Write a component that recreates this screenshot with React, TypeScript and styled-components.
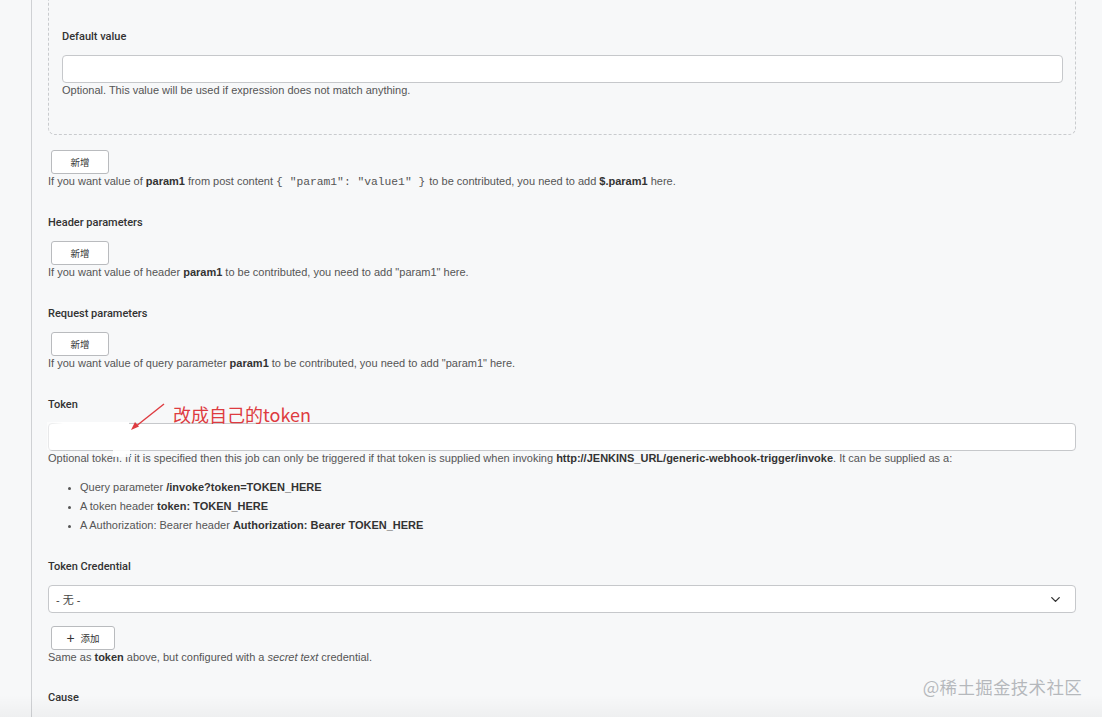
import React from "react";
import styled, { createGlobalStyle } from "styled-components";
import { ChevronDown } from "lucide-react";

const Global = createGlobalStyle`
  html, body { margin: 0; padding: 0; background: #f7f8f9; overflow: hidden; }
  body { font-family: "Liberation Sans", Arial, "Noto Sans CJK SC", sans-serif; }
`;

const Page = styled.div`
  position: relative;
  width: 1102px;
  height: 717px;
  overflow: hidden;
  background: #f7f8f9;
`;

const Rail = styled.div`
  margin-left: 31px;
  height: 100%;
  border-left: 1px solid #cfd1d4;
  padding-left: 16px;
`;

const Content = styled.div`
  width: 1028px;
  display: flex;
  flex-direction: column;
`;

const DashedBox = styled.div`
  margin-top: -20px;
  border: 1px dashed #c9cbce;
  border-radius: 0 0 7px 7px;
  padding: 49px 12px 37px 13px;
  display: flex;
  flex-direction: column;
`;

const Label = styled.div<{ $top?: number }>`
  font-family: Roboto, "Liberation Sans", sans-serif;
  font-weight: 500;
  font-size: 11px;
  line-height: 14px;
  color: #333;
  margin-top: ${(p) => (p.$top ?? 27)}px;
  margin-bottom: 11px;
`;

const TextInput = styled.div`
  height: 26px;
  background: #fff;
  border: 1px solid #c6c8cb;
  border-radius: 4px;
`;

const Help = styled.div`
  font-size: 11px;
  line-height: 14px;
  color: #555;
  b { color: #333; font-weight: 700; }
  i { font-style: italic; }
`;

const Code = styled.code`
  font-family: "Liberation Mono", "Courier New", monospace;
  font-size: 11.3px;
  color: #555;
  margin: 0 1px 0 0;
`;

const AddButton = styled.button<{ $w?: number }>`
  margin-left: 3px;
  width: ${(p) => p.$w ?? 58}px;
  height: 24px;
  box-sizing: border-box;
  background: #fff;
  border: 1px solid #b9bbbe;
  border-radius: 3px;
  font-family: "Noto Sans CJK SC", sans-serif;
  font-size: 9.5px;
  color: #333;
  padding: 0;
  display: flex;
  align-items: center;
  justify-content: center;
  gap: 6px;
  align-self: flex-start;
`;

const Plus = styled.span`
  font-family: "Liberation Sans", sans-serif;
  font-size: 14px;
  font-weight: 300;
  line-height: 1;
  margin-top: -1px;
`;

const BulletList = styled.ul`
  margin: 13px 0 0;
  padding-left: 32px;
  font-size: 11px;
  line-height: 19px;
  color: #555;
  li::marker { font-size: 9px; color: #555; }
  b { color: #333; font-weight: 700; }
`;

const Section = styled.div`
  position: relative;
  display: flex;
  flex-direction: column;
`;

const InputWrap = styled.div`
  position: relative;
`;

const Redaction = styled.div`
  position: absolute;
  left: -1px;
  top: -1px;
  width: 82px;
  height: 28px;
  background: linear-gradient(90deg, rgba(255,255,255,0.55), #fff 20%);
`;

const RedactionTail = styled.div`
  position: absolute;
  left: 65px;
  top: 27px;
  width: 17px;
  height: 7px;
  background: rgba(255, 255, 255, 0.9);
`;

const Annotation = styled.div`
  position: absolute;
  z-index: 2;
  left: 81px;
  top: 33px;
  display: flex;
  align-items: flex-start;
  gap: 6px;
  pointer-events: none;
`;

const AnnotationText = styled.span`
  font-family: "Noto Sans CJK SC", "Liberation Sans", sans-serif;
  font-size: 18px;
  line-height: 22px;
  color: #de3b40;
`;

const SelectBox = styled.div`
  height: 26px;
  background: #fff;
  border: 1px solid #c6c8cb;
  border-radius: 4px;
  display: flex;
  align-items: center;
  justify-content: space-between;
  padding: 0 12px 0 7px;
  font-family: "Liberation Sans", "Noto Sans CJK SC", sans-serif;
  font-size: 11px;
  color: #444;
`;

const ButtonRow = styled.div<{ $top?: number }>`
  margin-top: ${(p) => p.$top ?? 13}px;
  display: flex;
`;

const Watermark = styled.div`
  position: absolute;
  right: 20px;
  bottom: 19px;
  font-family: "Noto Sans CJK SC", sans-serif;
  font-size: 17.5px;
  line-height: 22px;
  color: rgba(160, 163, 168, 0.75);
  letter-spacing: 0.3px;
`;

const BottomShade = styled.div`
  position: absolute;
  left: 0;
  right: 0;
  bottom: 0;
  height: 22px;
  background: linear-gradient(180deg, rgba(0,0,0,0), rgba(0,0,0,0.035));
  pointer-events: none;
`;

export default function App() {
  return (
    <Page>
      <Global />
      <Rail>
        <Content>
          <DashedBox>
            <Label $top={0}>Default value</Label>
            <TextInput />
            <Help>Optional. This value will be used if expression does not match anything.</Help>
          </DashedBox>

          <Section>
            <ButtonRow $top={15}>
              <AddButton>新增</AddButton>
            </ButtonRow>
            <Help>
              If you want value of <b>param1</b> from post content <Code>{'{ "param1": "value1" }'}</Code> to be contributed, you need to add <b>$.param1</b> here.
            </Help>
          </Section>

          <Section>
            <Label>Header parameters</Label>
            <AddButton>新增</AddButton>
            <Help>
              If you want value of header <b>param1</b> to be contributed, you need to add "param1" here.
            </Help>
          </Section>

          <Section>
            <Label $top={28}>Request parameters</Label>
            <AddButton>新增</AddButton>
            <Help>
              If you want value of query parameter <b>param1</b> to be contributed, you need to add "param1" here.
            </Help>
          </Section>

          <Section>
            <Label $top={28}>Token</Label>
            <InputWrap>
              <TextInput />
              <Redaction />
              <RedactionTail />
            </InputWrap>
            <Annotation>
              <svg width="38" height="28" viewBox="0 0 38 28">
                <path d="M35 1 L6 24" stroke="#de3b40" strokeWidth="1.4" fill="none" />
                <path d="M2 27 L6 19 L10 23.5 Z" fill="#de3b40" />
              </svg>
              <AnnotationText>改成自己的token</AnnotationText>
            </Annotation>
            <Help>
              Optional token. If it is specified then this job can only be triggered if that token is supplied when invoking <b>http://JENKINS_URL/generic-webhook-trigger/invoke</b>. It can be supplied as a:
            </Help>
            <BulletList>
              <li>Query parameter <b>/invoke?token=TOKEN_HERE</b></li>
              <li>A token header <b>token: TOKEN_HERE</b></li>
              <li>A Authorization: Bearer header <b>Authorization: Bearer TOKEN_HERE</b></li>
            </BulletList>
          </Section>

          <Section>
            <Label $top={25}>Token Credential</Label>
            <SelectBox>
              <span>- 无 -</span>
              <ChevronDown size={15} strokeWidth={2.2} color="#333" />
            </SelectBox>
            <ButtonRow>
              <AddButton $w={64}>
                <Plus>+</Plus>
                <span>添加</span>
              </AddButton>
            </ButtonRow>
            <Help>
              Same as <b>token</b> above, but configured with a <i>secret text</i> credential.
            </Help>
          </Section>

          <Section>
            <Label>Cause</Label>
          </Section>
        </Content>
      </Rail>
      <BottomShade />
      <Watermark>@稀土掘金技术社区</Watermark>
    </Page>
  );
}
